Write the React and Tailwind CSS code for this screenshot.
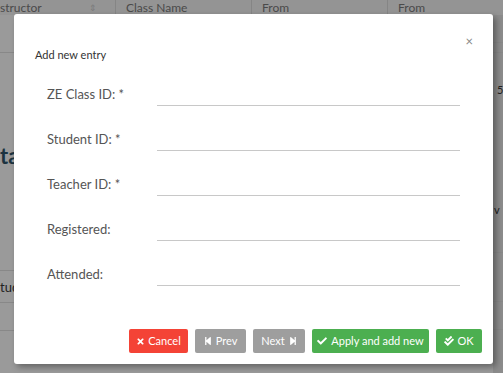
import React from "react";
import { FaTimes, FaStepBackward, FaStepForward, FaCheck, FaCheckDouble } from "react-icons/fa";

const font = { fontFamily: "Lato, 'Open Sans', sans-serif" };

function Row({ label }) {
  return (
    <div className="flex items-end h-[45px]">
      <div className="w-[110px] leading-[20px] pb-[2px] text-[13px] text-[#555]">{label}</div>
      <input className="w-[303px] h-[24px] border-b border-[#c8c8c8] outline-none" />
    </div>
  );
}

export default function App() {
  return (
    <div className="relative w-[503px] h-[373px] overflow-hidden bg-[#9a9a9a]" style={font}>
      {/* background page */}
      <div className="flex flex-col h-full">
        <div className="flex h-[15px] text-[12px] text-[#4a4a4a] leading-[15px] bg-[#949494]">
          <div className="w-[116px] flex items-center justify-between pr-[18px] border-r border-[#858585]">
            <span>structor</span>
            <span className="text-[9px] text-[#7a7a7a]">⇕</span>
          </div>
          <div className="w-[136px] pl-[10px] border-r border-[#858585]">Class Name</div>
          <div className="w-[136px] pl-[10px] border-r border-[#858585]">From</div>
          <div className="flex-1 pl-[10px]">From</div>
        </div>
        <div className="flex flex-1">
          <div className="w-[14px] flex flex-col">
            <div className="h-[38px] border-b border-[#888]" />
            <div className="h-[90px]" />
            <div className="text-[22px] font-bold text-[#1c3340] leading-[26px] whitespace-nowrap">ta</div>
            <div className="h-[102px] border-b border-[#888]" />
            <div className="h-[32px] border-b border-[#888] text-[13px] text-[#222] leading-[32px] whitespace-nowrap">tud</div>
            <div className="h-[28px] border-b border-[#888]" />
          </div>
          <div className="flex-1" />
          <div className="w-[10px] flex flex-col bg-[#8c8c8c]">
            <div className="h-[28px] border-b border-[#888]" />
            <div className="h-[10px] border-b border-[#888]" />
            <div className="h-[30px]" />
            <div className="text-[11px] text-[#222] leading-[14px] pl-[4px]">5</div>
            <div className="h-[106px]" />
            <div className="text-[11px] text-[#222] leading-[14px] pl-[1px]">v</div>
            <div className="h-[36px] border-b border-[#888]" />
            <div className="h-[49px] border-b border-[#888]" />
            <div className="h-[28px] border-b border-[#888]" />
          </div>
        </div>
      </div>

      {/* modal */}
      <div className="absolute left-[14px] top-[14px] w-[479px] h-[350px] bg-white rounded-[3px] flex flex-col shadow-[3px_3px_6px_rgba(0,0,0,0.35)]">
        <div className="relative h-[47px] pt-[34px] pl-[21px]">
          <div className="text-[11px] leading-[14px] text-[#333]">Add new entry</div>
          <div className="absolute right-[20px] top-[20px] text-[#888] text-[13px] leading-[14px]">×</div>
        </div>
        <div className="flex flex-col pl-[33px]">
          <Row label="ZE Class ID: *" />
          <Row label="Student ID: *" />
          <Row label="Teacher ID: *" />
          <Row label="Registered:" />
          <Row label="Attended:" />
        </div>
        <div className="mt-auto flex justify-end gap-[7px] pr-[11px] pb-[11px] text-[11px] text-white">
          <button className="w-[59px] h-[24px] rounded-[2px] bg-[#f44336] flex items-center justify-center gap-[3px]">
            <FaTimes className="w-[9px] h-[9px]" />Cancel
          </button>
          <button className="w-[51px] h-[24px] rounded-[2px] bg-[#9e9e9e] flex items-center justify-center gap-[4px]">
            <FaStepBackward className="w-[8px] h-[10px]" />Prev
          </button>
          <button className="w-[52px] h-[24px] rounded-[2px] bg-[#9e9e9e] flex items-center justify-center gap-[4px]">
            Next<FaStepForward className="w-[8px] h-[10px]" />
          </button>
          <button className="w-[117px] h-[24px] rounded-[2px] bg-[#4caf50] flex items-center justify-center gap-[4px]">
            <FaCheck className="w-[10px] h-[10px]" />Apply and add new
          </button>
          <button className="w-[46px] h-[24px] rounded-[2px] bg-[#4caf50] flex items-center justify-center gap-[3px]">
            <FaCheckDouble className="w-[10px] h-[10px]" />OK
          </button>
        </div>
      </div>
    </div>
  );
}
